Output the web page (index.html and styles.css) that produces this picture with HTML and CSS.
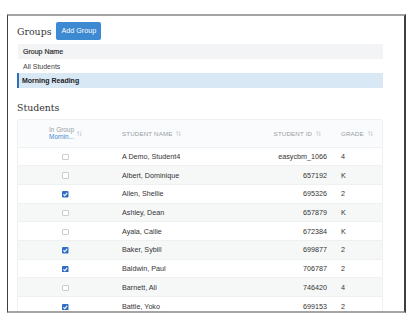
FILE: index.html
```html
<!DOCTYPE html>
<html lang="en">
<head>
    <meta charset="UTF-8">
    <meta name="viewport" content="width=device-width, initial-scale=1.0">
    <title>Groups</title>
    <link rel="stylesheet" href="styles.css">
</head>
<body>
    <div class="frame">
        <div class="groups-bar">
            <h2 class="section-title">Groups</h2>
            <a class="btn-primary">Add Group</a>
        </div>
        <table class="group-table">
            <thead>
                <tr><th>Group Name</th></tr>
            </thead>
            <tbody>
                <tr><td>All Students</td></tr>
                <tr class="selected"><td>Morning Reading</td></tr>
            </tbody>
        </table>

        <h2 class="section-title students-title">Students</h2>
        <div class="student-wrap">
            <table class="student-table">
                <colgroup>
                    <col class="col-check">
                    <col class="col-name">
                    <col class="col-id">
                    <col class="col-grade">
                </colgroup>
                <thead>
                    <tr>
                        <th class="th-check">
                            <span class="th-inner">
                                <span class="th-lines">
                                    <span class="th-muted">In Group</span>
                                    <span class="th-link">Mornin...</span>
                                </span>
                                <svg class="sort" viewBox="0 0 6 6"><path d="M1.5 5.6V0.6M0.4 1.8L1.5 0.6L2.6 1.8M4.5 0.4V5.4M3.4 4.2L4.5 5.4L5.6 4.2"/></svg>
                            </span>
                        </th>
                        <th class="th-name">Student Name <svg class="sort" viewBox="0 0 6 6"><path d="M1.5 5.6V0.6M0.4 1.8L1.5 0.6L2.6 1.8M4.5 0.4V5.4M3.4 4.2L4.5 5.4L5.6 4.2"/></svg></th>
                        <th class="th-id">Student ID <svg class="sort" viewBox="0 0 6 6"><path d="M1.5 5.6V0.6M0.4 1.8L1.5 0.6L2.6 1.8M4.5 0.4V5.4M3.4 4.2L4.5 5.4L5.6 4.2"/></svg></th>
                        <th class="th-grade">Grade <svg class="sort" viewBox="0 0 6 6"><path d="M1.5 5.6V0.6M0.4 1.8L1.5 0.6L2.6 1.8M4.5 0.4V5.4M3.4 4.2L4.5 5.4L5.6 4.2"/></svg></th>
                    </tr>
                </thead>
                <tbody>
                    <tr>
                        <td class="td-check"><span class="box"></span></td>
                        <td>A Demo, Student4</td>
                        <td class="td-id">easycbm_1066</td>
                        <td class="td-grade">4</td>
                    </tr>
                    <tr>
                        <td class="td-check"><span class="box"></span></td>
                        <td>Albert, Dominique</td>
                        <td class="td-id">657192</td>
                        <td class="td-grade">K</td>
                    </tr>
                    <tr>
                        <td class="td-check"><svg class="box-on" viewBox="0 0 6 6"><rect width="6" height="6" rx="1"/><path d="M1.3 3.1L2.5 4.3L4.8 1.7"/></svg></td>
                        <td>Allen, Shellie</td>
                        <td class="td-id">695326</td>
                        <td class="td-grade">2</td>
                    </tr>
                    <tr>
                        <td class="td-check"><span class="box"></span></td>
                        <td>Ashley, Dean</td>
                        <td class="td-id">657879</td>
                        <td class="td-grade">K</td>
                    </tr>
                    <tr>
                        <td class="td-check"><span class="box"></span></td>
                        <td>Ayala, Callie</td>
                        <td class="td-id">672384</td>
                        <td class="td-grade">K</td>
                    </tr>
                    <tr>
                        <td class="td-check"><svg class="box-on" viewBox="0 0 6 6"><rect width="6" height="6" rx="1"/><path d="M1.3 3.1L2.5 4.3L4.8 1.7"/></svg></td>
                        <td>Baker, Sybill</td>
                        <td class="td-id">699877</td>
                        <td class="td-grade">2</td>
                    </tr>
                    <tr>
                        <td class="td-check"><svg class="box-on" viewBox="0 0 6 6"><rect width="6" height="6" rx="1"/><path d="M1.3 3.1L2.5 4.3L4.8 1.7"/></svg></td>
                        <td>Baldwin, Paul</td>
                        <td class="td-id">706787</td>
                        <td class="td-grade">2</td>
                    </tr>
                    <tr>
                        <td class="td-check"><span class="box"></span></td>
                        <td>Barnett, Ali</td>
                        <td class="td-id">746420</td>
                        <td class="td-grade">4</td>
                    </tr>
                    <tr>
                        <td class="td-check"><svg class="box-on" viewBox="0 0 6 6"><rect width="6" height="6" rx="1"/><path d="M1.3 3.1L2.5 4.3L4.8 1.7"/></svg></td>
                        <td>Battle, Yoko</td>
                        <td class="td-id">699153</td>
                        <td class="td-grade">2</td>
                    </tr>
                </tbody>
            </table>
        </div>
    </div>
</body>
</html>
```

FILE: styles.css
```css
html,
body{
    margin:0;
    padding:0;
    background:#fff;
}
body{
    font-family:"Liberation Sans", Arial, sans-serif;
    color:#333;
}
*,
*:before,
*:after{
    box-sizing:border-box;
}
a{
    display:block;
    cursor:pointer;
    text-decoration:none;
}

/* outer screenshot frame */
.frame{
    margin:14px 0 0 7px;
    width:399px;
    height:299px;
    border-top:2px solid #a4a4a4;
    border-bottom:2px solid #a4a4a4;
    border-left:1px solid #3e3e3e;
    border-right:2px solid #3e3e3e;
    padding:6px 21px 0 9px;
    overflow:hidden;
}

.section-title{
    margin:0;
    font-family:"DejaVu Serif", "Liberation Serif", serif;
    font-size:9.4px;
    font-weight:normal;
    line-height:12px;
    color:#333;
}
.groups-bar{
    display:flex;
    align-items:center;
    gap:5px;
    height:18px;
}
.groups-bar .section-title{
    padding-top:2px;
}
.btn-primary{
    height:18px;
    line-height:18px;
    padding:0 5px;
    font-size:7.2px;
    color:#fff;
    background:#3d8ad2;
    border-radius:2px;
}

/* groups list */
.group-table{
    width:100%;
    margin-top:4px;
    border-collapse:collapse;
    font-size:7px;
}
.group-table th,
.group-table td{
    height:14.7px;
    padding:0 5px;
    text-align:left;
    color:#444;
}
.group-table th{
    background:#f3f4f6;
    font-weight:normal;
    color:#333;
    -webkit-text-stroke:0.2px #333;
}
.group-table .selected td{
    background:#d9e8f5;
    border-left:2px solid #2f6fb7;
    padding-left:3px;
    font-weight:bold;
    color:#222;
}

/* students table */
.students-title{
    margin:14px 0 5px;
}
.student-wrap{
    border:1px solid #eef0f2;
    border-radius:3px;
    overflow:hidden;
}
.student-table{
    width:100%;
    table-layout:fixed;
    border-collapse:collapse;
    font-size:7.2px;
}
.col-check{ width:95px; }
.col-name{ width:147px; }
.col-id{ width:75px; }
.col-grade{ width:47px; }

.student-table th{
    height:27px;
    padding:0;
    background:#fafbfc;
    font-size:6.2px;
    font-weight:normal;
    text-transform:uppercase;
    letter-spacing:0.15px;
    color:#979da3;
    text-align:left;
    white-space:nowrap;
}
.student-table .th-check{
    text-align:center;
    text-transform:none;
    font-size:6.4px;
    letter-spacing:0;
}
.th-inner{
    display:inline-flex;
    align-items:center;
    gap:3px;
}
.th-lines{
    display:flex;
    flex-direction:column;
    text-align:left;
    line-height:7px;
}
.th-link{
    color:#3d8ad2;
}
.student-table .th-name{
    padding-left:9px;
}
.student-table .th-id{
    text-align:right;
    padding-right:14px;
}
.student-table .th-grade{
    padding-left:6px;
}
.sort{
    width:5px;
    height:5px;
    margin-left:2px;
    vertical-align:-0.5px;
    fill:none;
    stroke:#b9bec4;
    stroke-width:0.7;
}
.th-inner .sort{
    margin-left:0;
}

.student-table td{
    height:18.7px;
    padding:0 0 0 9px;
    border-top:1px solid #eef0f1;
    color:#333;
    white-space:nowrap;
}
.student-table tbody tr:nth-child(even) td{
    background:#f6f8f8;
}
.student-table .td-check{
    padding:0;
    text-align:center;
}
.student-table .td-id{
    padding:0 8px 0 0;
    text-align:right;
}
.student-table .td-grade{
    padding-left:6px;
}

/* checkboxes */
.box,
.box-on{
    display:inline-block;
    width:6.5px;
    height:6.5px;
    vertical-align:middle;
}
.box{
    border:1px solid #c9ced3;
    border-radius:1px;
    background:#fff;
}
.box-on rect{
    fill:#2f6ec2;
}
.box-on path{
    fill:none;
    stroke:#fff;
    stroke-width:1;
}
```
